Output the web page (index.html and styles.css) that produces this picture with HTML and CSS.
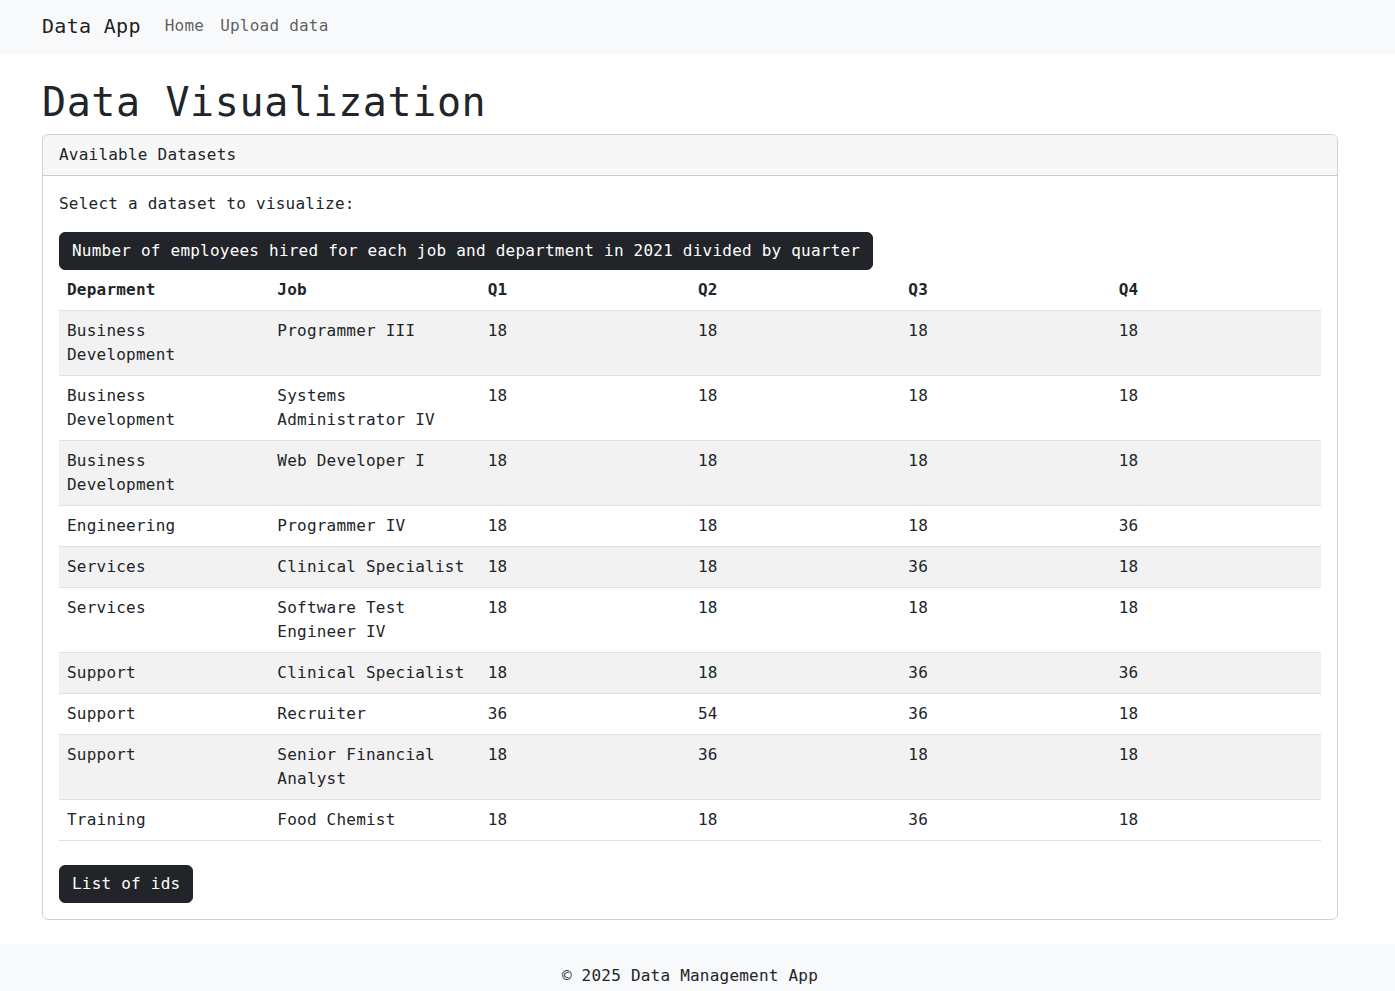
FILE: index.html
```html
<!DOCTYPE html>
<html lang="en">
<head>
<meta charset="utf-8">
<title>Data App</title>
<link rel="stylesheet" href="styles.css">
</head>
<body>
<nav class="navbar">
  <div class="container nav-inner">
    <a class="brand" href="#">Data App</a>
    <a class="nav-link" href="#">Home</a>
    <a class="nav-link" href="#">Upload data</a>
  </div>
</nav>
<main class="container main">
  <h1 class="title">Data Visualization</h1>
  <div class="card">
    <div class="card-header">Available Datasets</div>
    <div class="card-body">
      <p class="lead-text">Select a dataset to visualize:</p>
      <button class="btn">Number of employees hired for each job and department in 2021 divided by quarter</button>
      <table class="table">
        <thead>
          <tr><th>Deparment</th><th>Job</th><th>Q1</th><th>Q2</th><th>Q3</th><th>Q4</th></tr>
        </thead>
        <tbody>
          <tr><td>Business Development</td><td>Programmer III</td><td>18</td><td>18</td><td>18</td><td>18</td></tr>
          <tr><td>Business Development</td><td>Systems Administrator IV</td><td>18</td><td>18</td><td>18</td><td>18</td></tr>
          <tr><td>Business Development</td><td>Web Developer I</td><td>18</td><td>18</td><td>18</td><td>18</td></tr>
          <tr><td>Engineering</td><td>Programmer IV</td><td>18</td><td>18</td><td>18</td><td>36</td></tr>
          <tr><td>Services</td><td>Clinical Specialist</td><td>18</td><td>18</td><td>36</td><td>18</td></tr>
          <tr><td>Services</td><td>Software Test Engineer IV</td><td>18</td><td>18</td><td>18</td><td>18</td></tr>
          <tr><td>Support</td><td>Clinical Specialist</td><td>18</td><td>18</td><td>36</td><td>36</td></tr>
          <tr><td>Support</td><td>Recruiter</td><td>36</td><td>54</td><td>36</td><td>18</td></tr>
          <tr><td>Support</td><td>Senior Financial Analyst</td><td>18</td><td>36</td><td>18</td><td>18</td></tr>
          <tr><td>Training</td><td>Food Chemist</td><td>18</td><td>18</td><td>36</td><td>18</td></tr>
        </tbody>
      </table>
      <div class="actions">
        <button class="btn">List of ids</button>
      </div>
    </div>
  </div>
</main>
<footer class="footer">
  <div class="container footer-inner">© 2025 Data Management App</div>
</footer>
</body>
</html>
```
FILE: styles.css
```css
* { box-sizing: border-box; }
html, body { margin: 0; padding: 0; }
body {
  font-family: "DejaVu Sans Mono", "Liberation Mono", monospace;
  font-size: 16px;
  line-height: 24px;
  letter-spacing: 0.22px;
  color: #212529;
  background: #fff;
}
.container {
  width: 1296px;
  margin-left: 42px;
}
.navbar {
  background: #f8f9fa;
  height: 54px;
}
.nav-inner {
  display: flex;
  align-items: center;
  height: 54px;
  padding-bottom: 3px;
}
.brand {
  font-size: 20px;
  line-height: 30px;
  letter-spacing: 0.3px;
  color: rgba(0,0,0,0.9);
  text-decoration: none;
  margin-right: 16px;
}
.nav-link {
  color: rgba(0,0,0,0.65);
  text-decoration: none;
  padding: 0 8px;
  font-size: 16px;
  line-height: 24px;
}
.main { padding-top: 24px; }
.title {
  font-size: 40px;
  line-height: 48px;
  font-weight: 500;
  letter-spacing: 0.6px;
  margin: 0 0 8px 0;
}
.card {
  border: 1px solid rgba(0,0,0,0.175);
  border-radius: 6px;
  overflow: hidden;
}
.card-header {
  background: rgba(0,0,0,0.03);
  border-bottom: 1px solid rgba(0,0,0,0.175);
  padding: 8px 16px;
}
.card-body { padding: 16px; }
.lead-text { margin: 0 0 16px 0; }
.btn {
  font-family: inherit;
  font-size: 16px;
  line-height: 24px;
  letter-spacing: inherit;
  color: #fff;
  background: #212529;
  border: 1px solid #212529;
  border-radius: 6px;
  padding: 6px 12px;
  cursor: pointer;
  display: inline-block;
}
.table {
  width: 100%;
  table-layout: fixed;
  border-collapse: collapse;
  margin-bottom: 24px;
}
.table th, .table td {
  text-align: left;
  vertical-align: top;
  padding: 8px;
  border-bottom: 1px solid #dee2e6;
}
.table th { font-weight: 700; }
.table tbody tr:nth-child(odd) td { background: #f2f2f2; }
.footer {
  background: #f8f9fa;
  margin-top: 24px;
  padding: 20px 0 16px;
}
.footer-inner { text-align: center; }
```
